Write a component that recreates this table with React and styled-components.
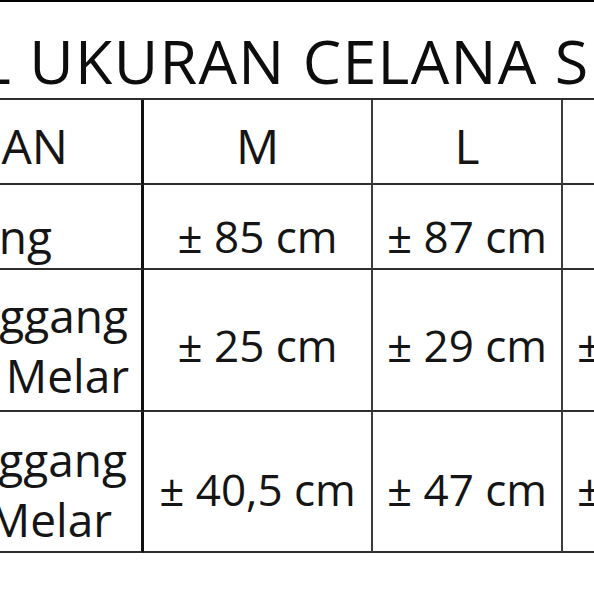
import React from "react";
import styled, { createGlobalStyle } from "styled-components";

const GlobalStyle = createGlobalStyle`
  html, body {
    margin: 0;
    padding: 0;
    background: #ffffff;
  }
  body {
    font-family: "Open Sans", "Noto Sans", sans-serif;
    color: #161616;
  }
`;

const columns = [
  { key: "m", title: "M" },
  { key: "l", title: "L" },
  { key: "xl", title: "XL" },
];

const rows = [
  {
    label: [{ text: "ng", pad: 89 }],
    values: { m: "± 85 cm", l: "± 87 cm", xl: "" },
    height: 85,
    shift: 18,
  },
  {
    label: [
      { text: "ggang", pad: 13 },
      { text: "Melar", pad: 12 },
    ],
    values: { m: "± 25 cm", l: "± 29 cm", xl: "± 33 cm" },
    height: 142,
    shift: 10,
  },
  {
    label: [
      { text: "ggang", pad: 14 },
      { text: "Melar", pad: 29 },
    ],
    values: { m: "± 40,5 cm", l: "± 47 cm", xl: "± 52 cm" },
    height: 141,
    shift: 14,
  },
];

const App = () => {
  return (
    <>
      <GlobalStyle />
      <StyledSheet>
        <StyledTitle>L UKURAN CELANA S</StyledTitle>

        <StyledGrid $rows={[85, ...rows.map((row) => row.height)]}>
          <StyledLabelCell $shift={8}>
            <StyledLabelLine $pad={73} $head>
              AN
            </StyledLabelLine>
          </StyledLabelCell>
          {columns.map((col) => (
            <StyledCell key={col.key} $head $shift={8}>
              {col.title}
            </StyledCell>
          ))}

          {rows.map((row, i) => (
            <React.Fragment key={i}>
              <StyledLabelCell $shift={row.shift}>
                {row.label.map((line, j) => (
                  <StyledLabelLine key={j} $pad={line.pad}>
                    {line.text}
                  </StyledLabelLine>
                ))}
              </StyledLabelCell>
              {columns.map((col) => (
                <StyledCell key={col.key} $shift={row.shift}>
                  {row.values[col.key]}
                </StyledCell>
              ))}
            </React.Fragment>
          ))}
        </StyledGrid>
      </StyledSheet>
    </>
  );
};

const StyledSheet = styled.main`
  width: 594px;
  height: 594px;
  overflow: hidden;
  box-sizing: border-box;
  border-top: 2px solid #000000;
  background: #ffffff;
`;

const StyledTitle = styled.h1`
  margin: 0 0 0 -21px;
  padding: 29px 0 7px;
  font-family: "Open Sans", "Noto Sans", sans-serif;
  font-weight: 400;
  font-size: 61px;
  line-height: 60px;
  letter-spacing: 1.3px;
  white-space: nowrap;
  color: #0d0d0d;
`;

const StyledGrid = styled.div`
  display: grid;
  grid-template-columns: 144px 229px 190px 190px;
  grid-template-rows: ${(props) => props.$rows.map((h) => `${h}px`).join(" ")};
  width: max-content;
  border-top: 2px solid #2e2e2e;
`;

const StyledCell = styled.div`
  display: flex;
  align-items: center;
  justify-content: center;
  box-sizing: border-box;
  padding-top: ${(props) => props.$shift}px;
  border-right: 2px solid #3c3c3c;
  border-bottom: 2px solid #2e2e2e;
  font-size: ${(props) => (props.$head ? "48px" : "44px")};
  white-space: nowrap;
  color: #151515;
`;

const StyledLabelCell = styled.div`
  display: flex;
  flex-direction: column;
  align-items: flex-end;
  justify-content: center;
  box-sizing: border-box;
  padding-top: ${(props) => props.$shift}px;
  border-right: 3px solid #111111;
  border-bottom: 2px solid #2e2e2e;
  overflow: hidden;
`;

const StyledLabelLine = styled.span`
  display: block;
  padding-right: ${(props) => props.$pad}px;
  font-size: ${(props) => (props.$head ? "48px" : "46px")};
  line-height: 60px;
  white-space: nowrap;
  color: #151515;
`;

export default App;
